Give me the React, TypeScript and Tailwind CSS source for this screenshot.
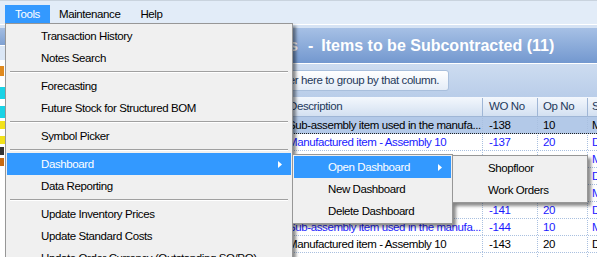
import React from "react";

const FONT = { fontFamily: '"Liberation Sans", Arial, sans-serif' };

type Row = { d: string; wo: string; op: string; s: string; blue: boolean; sel?: boolean };
const rows: Row[] = [
  { d: "Sub-assembly item used in the manufa...", wo: "-138", op: "10", s: "M", blue: false, sel: true },
  { d: "Manufactured item - Assembly 10", wo: "-137", op: "20", s: "D", blue: true },
  { d: "Sub-assembly item used in the manufa...", wo: "-140", op: "10", s: "M", blue: true },
  { d: "Manufactured item - Assembly 10", wo: "-139", op: "20", s: "D", blue: true },
  { d: "Sub-assembly item used in the manufa...", wo: "-142", op: "10", s: "M", blue: true },
  { d: "Manufactured item - Assembly 10", wo: "-141", op: "20", s: "D", blue: true },
  { d: "Sub-assembly item used in the manufa...", wo: "-144", op: "10", s: "M", blue: true },
  { d: "Manufactured item - Assembly 10", wo: "-143", op: "20", s: "D", blue: false },
  { d: "Sub-assembly item used in the manufa...", wo: "-146", op: "10", s: "M", blue: false },
];

const Arrow = () => (
  <svg width="4" height="7" viewBox="0 0 4 7" className="block">
    <path d="M0 0 L4 3.5 L0 7 Z" fill="currentColor" />
  </svg>
);

const Sep = () => (
  <div className="h-[6px] flex flex-col justify-center px-[3px]">
    <div className="h-px bg-[#a0a0a0]" />
    <div className="h-px bg-white" />
  </div>
);

const Item = ({ label, hi, sub }: { label: string; hi?: boolean; sub?: boolean }) => (
  <div
    className={`h-[22px] flex items-center pl-[34px] pr-[9px] whitespace-nowrap ${hi ? "bg-[#3399ff] text-white" : "text-black"}`}
  >
    <span className="flex-1 pt-[2px]">{label}</span>
    {sub && <Arrow />}
  </div>
);

export default function App() {
  return (
    <div
      className="w-[597px] h-[257px] relative overflow-hidden bg-white text-[11.5px] tracking-[-0.4px] leading-none"
      style={FONT}
    >
      {/* menubar */}
      <div className="h-[24px] bg-[#e2ecf8] border-t border-[#c9d3de] flex items-end pl-[5px]">
        <div className="h-[19px] w-[45px] flex items-center justify-center bg-[#3399ff] text-white">Tools</div>
        <div className="h-[19px] px-[9px] flex items-center text-black">Maintenance</div>
        <div className="h-[19px] px-[11px] flex items-center text-black">Help</div>
      </div>
      <div className="h-px bg-white" />
      <div className="h-[3px] bg-[#d6e3f4]" />

      <div className="flex">
        {/* left nav pane */}
        <div className="w-[140px] shrink-0 flex flex-col">
          <div className="h-[17px] bg-gradient-to-b from-[#a3bde2] to-[#7fa1d2]" />
          <div className="h-px bg-white" />
          <div className="h-[14px] bg-[#dbe7f6]" />
          <div className="flex flex-col pt-[6px] gap-[3px]">
            <div className="h-[10px] w-[4px] bg-[#e08a1e]" />
            <div className="h-[12px] w-[5px] bg-[#19d3e6] mt-[8px]" />
            <div className="h-[12px] w-[5px] bg-[#19d3e6] mt-[4px]" />
            <div className="h-[8px] w-[5px] bg-[#f2e21a]" />
            <div className="h-[8px] w-[5px] bg-[#f2e21a] mt-[4px]" />
            <div className="h-[8px] w-[4px] bg-[#333]" />
            <div className="h-[8px] w-[4px] bg-[#c86a10]" />
          </div>
        </div>

        {/* main pane */}
        <div className="flex-1 flex flex-col min-w-0">
          <div className="h-[35px] bg-gradient-to-b from-[#a6c0e5] to-[#7398cf] flex items-center text-white font-bold text-[16px] tracking-normal whitespace-nowrap overflow-hidden">
            <span className="w-[158px] text-right shrink-0">Dashboards</span>
            <span className="pl-[10px] pr-[8px]">-</span>
            <span>Items to be Subcontracted (11)</span>
          </div>
          <div className="h-px bg-white" />
          <div className="h-[33px] bg-gradient-to-b from-[#cddcf0] to-[#b9cde9] flex items-center">
            <div className="ml-[60px] w-[249px] h-[21px] rounded-[3px] border border-[#a9bfdc] bg-gradient-to-b from-white to-[#e4ecf7] flex items-center justify-end pr-[9px] pt-px text-[#1e395b] whitespace-nowrap overflow-hidden">
              <span className="shrink-0">Drag a column header here to group by that column.</span>
            </div>
          </div>
          {/* header */}
          <div className="h-[20px] flex bg-gradient-to-b from-[#f4f8fd] to-[#d3e0f1] border-b border-[#9fb6d6] text-[#1e395b] pt-px">
            <div className="w-[147px] shrink-0 border-r border-[#9fb6d6]" />
            <div className="w-[196px] shrink-0 flex items-center pl-[2px] border-r border-[#9fb6d6]">Description</div>
            <div className="w-[55px] shrink-0 flex items-center pl-[6px] border-r border-[#9fb6d6]">WO No</div>
            <div className="w-[50px] shrink-0 flex items-center pl-[5px] border-r border-[#9fb6d6]">Op No</div>
            <div className="flex-1 flex items-center pl-[4px] overflow-hidden">S</div>
          </div>
          {rows.map((r, i) => (
            <div
              key={i}
              className={`h-[17px] flex whitespace-nowrap pt-px ${r.sel ? "bg-[#b3c9e8] border-b border-dotted border-[#222]" : "border-b border-dotted border-[#a9c0e0]"} ${r.blue ? "text-[#1a1aff]" : "text-black"}`}
            >
              <div className="w-[147px] shrink-0 border-r border-dotted border-[#a9c0e0]" />
              <div className="w-[196px] shrink-0 flex items-center pl-[1px] border-r border-dotted border-[#a9c0e0] overflow-hidden">{r.d}</div>
              <div className="w-[55px] shrink-0 flex items-center pl-[6px] border-r border-dotted border-[#a9c0e0]">{r.wo}</div>
              <div className="w-[50px] shrink-0 flex items-center pl-[5px] border-r border-dotted border-[#a9c0e0]">{r.op}</div>
              <div className="flex-1 flex items-center pl-[4px] overflow-hidden">{r.s}</div>
            </div>
          ))}
        </div>
      </div>

      {/* Tools menu */}
      <div className="absolute left-[5px] top-[23px] w-[288px] h-[250px] bg-[#f0f0f0] border border-[#979797] shadow-[3px_3px_3px_rgba(0,0,0,0.45)] py-[1px] px-px">
        <Item label="Transaction History" />
        <Item label="Notes Search" />
        <Sep />
        <Item label="Forecasting" />
        <Item label="Future Stock for Structured BOM" />
        <Sep />
        <Item label="Symbol Picker" />
        <Sep />
        <Item label="Dashboard" hi sub />
        <Item label="Data Reporting" />
        <Sep />
        <Item label="Update Inventory Prices" />
        <Item label="Update Standard Costs" />
        <Item label="Update Order Currency (Outstanding SO/PO)" />
      </div>

      {/* Dashboard submenu */}
      <div className="absolute left-[292px] top-[154px] w-[161px] bg-[#f0f0f0] border border-[#979797] shadow-[3px_3px_3px_rgba(0,0,0,0.45)] py-px px-px">
        <Item label="Open Dashboard" hi sub />
        <Item label="New Dashboard" />
        <Item label="Delete Dashboard" />
      </div>

      {/* Open Dashboard submenu */}
      <div className="absolute left-[452px] top-[155px] w-[136px] bg-[#f0f0f0] border border-[#979797] shadow-[3px_3px_3px_rgba(0,0,0,0.45)] py-px px-px">
        <Item label="Shopfloor" />
        <Item label="Work Orders" />
      </div>
    </div>
  );
}
